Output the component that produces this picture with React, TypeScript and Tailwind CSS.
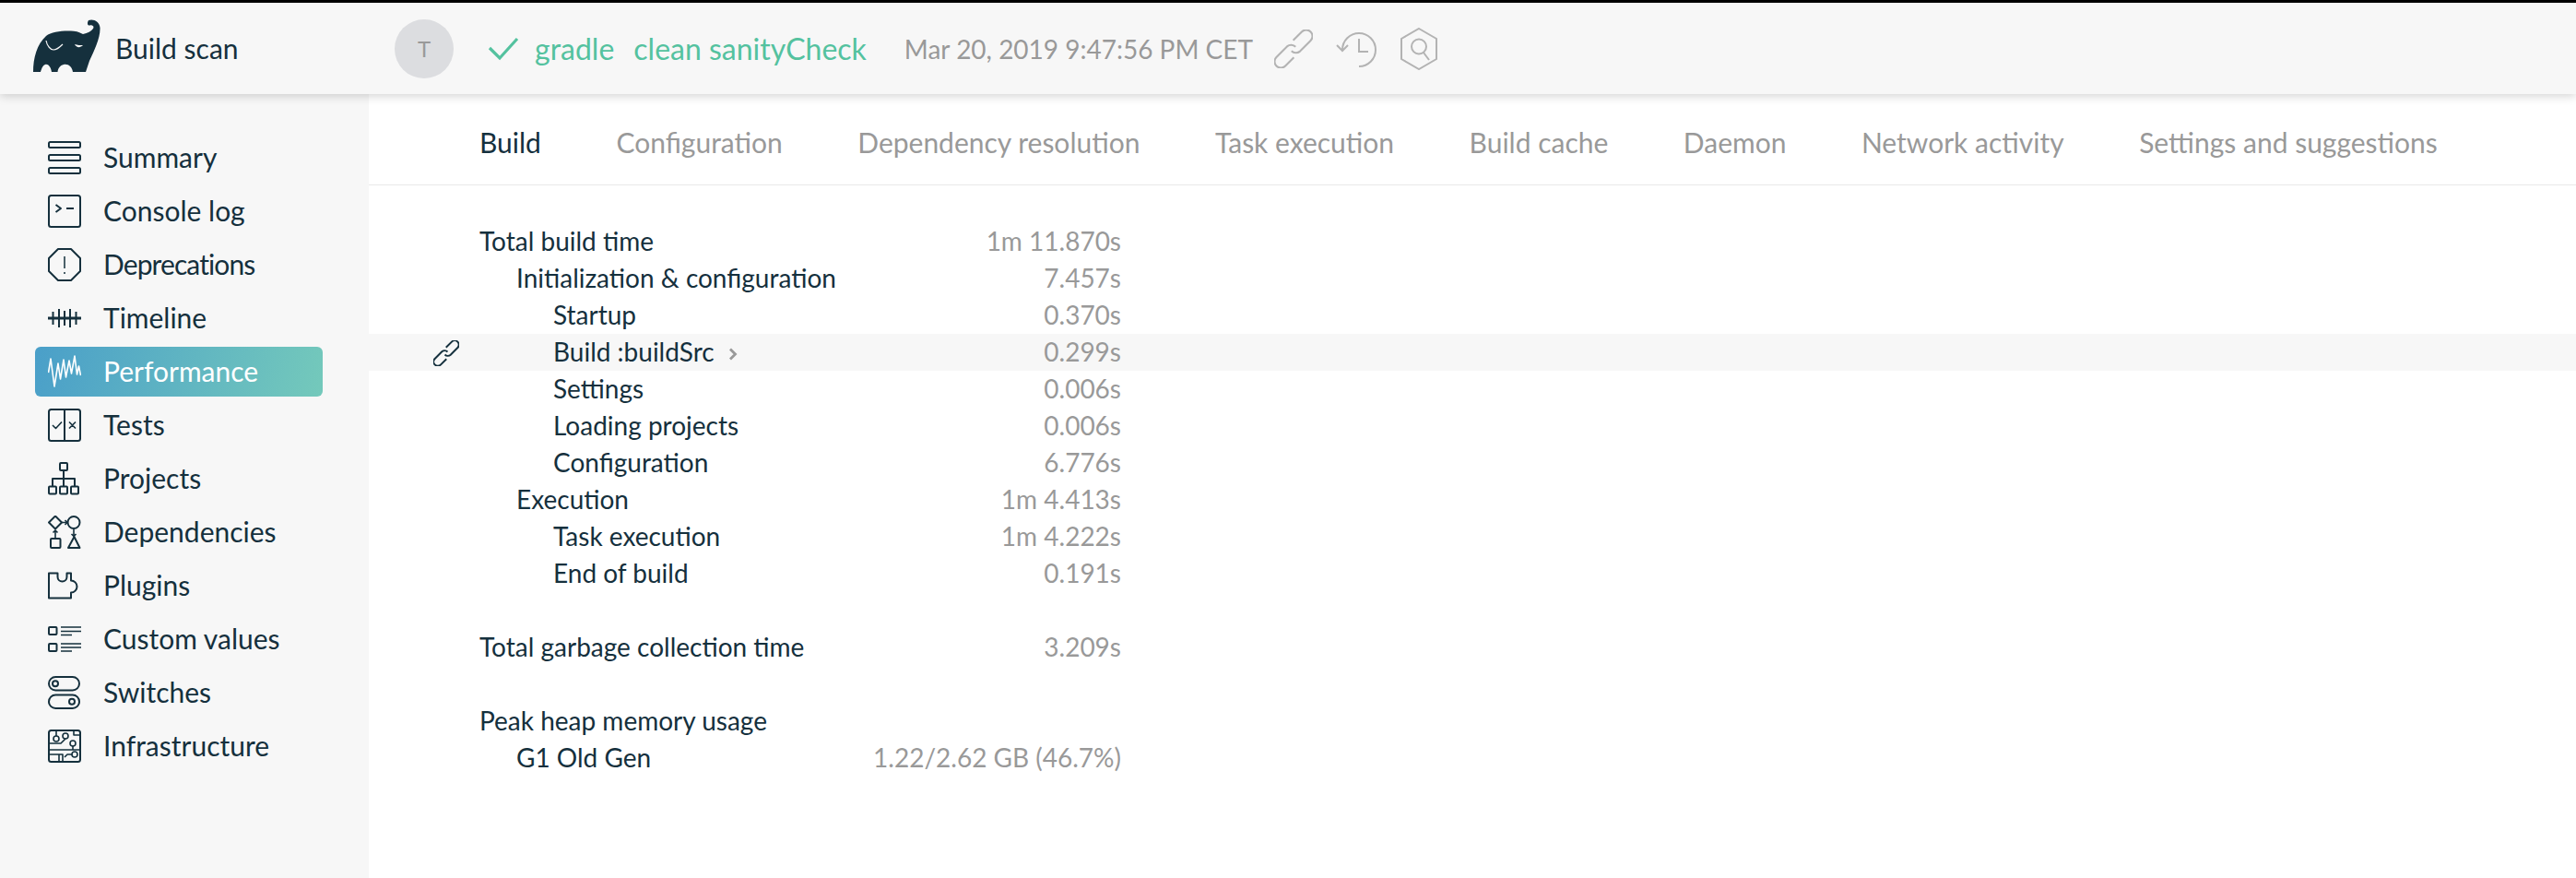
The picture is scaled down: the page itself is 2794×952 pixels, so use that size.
import { ReactNode } from "react";

function Icon({ children }: { children: ReactNode }) {
  return (
    <svg
      viewBox="0 0 36 36"
      className="h-9 w-9 shrink-0"
      fill="none"
      stroke="currentColor"
      strokeWidth="2"
      strokeLinejoin="round"
    >
      {children}
    </svg>
  );
}

const navItems: { label: string; active?: boolean; tight?: boolean; icon: ReactNode }[] = [
  {
    label: "Summary",
    icon: (
      <>
        <rect x="1" y="1" width="34" height="6" rx="1.5" />
        <rect x="1" y="15" width="34" height="6" rx="1.5" />
        <rect x="1" y="29" width="34" height="6" rx="1.5" />
      </>
    ),
  },
  {
    label: "Console log",
    icon: (
      <>
        <rect x="1" y="1" width="34" height="34" rx="2.5" />
        <path d="M8.500 11l5.500 4-5.500 4M20 15h8" />
      </>
    ),
  },
  {
    label: "Deprecations",
    tight: true,
    icon: (
      <>
        <path d="M11 1h14l10 10v14L25 35H11L1 25V11z" />
        <path d="M18 9v13M18 26v2" strokeWidth="1.5" />
      </>
    ),
  },
  {
    label: "Timeline",
    icon: (
      <>
        <path d="M0 18h36" strokeWidth="3" />
        <path d="M5.500 11v14M12 8v20M18 10v16M24 8v20M30.500 11v14" />
      </>
    ),
  },
  {
    label: "Performance",
    active: true,
    icon: (
      <path
        d="M0.500 19L3 4l4 30 4-25 2.500 17 3.500-21 2.500 19L23 6l2.500 14L29 1l2.500 20 2-9 2 10"
        strokeWidth="1.6"
      />
    ),
  },
  {
    label: "Tests",
    icon: (
      <>
        <rect x="1" y="1" width="34" height="34" rx="2.5" />
        <path d="M18 1v34" />
        <path d="M5 18l3.500 3.500L15 14.500M23 14.500l7 7M30 14.500l-7 7" strokeWidth="1.6" />
      </>
    ),
  },
  {
    label: "Projects",
    icon: (
      <>
        <rect x="13" y="1" width="8" height="8" rx="1" />
        <rect x="1" y="26.500" width="8" height="8" rx="1" />
        <rect x="13" y="26.500" width="8" height="8" rx="1" />
        <rect x="25" y="26.500" width="8" height="8" rx="1" />
        <path d="M17 9v17.500M5 26.500V18h24v8.500" />
      </>
    ),
  },
  {
    label: "Dependencies",
    icon: (
      <>
        <path d="M8 0.500L15 7.500 8 14.500 1 7.500z" />
        <circle cx="28" cy="7.500" r="6.500" />
        <rect x="3" y="25" width="10.500" height="10" rx="1" />
        <path d="M28.500 23l6 12h-12.500z" />
        <path
          d="M15 7.500h6M18.500 5l2.500 2.500-2.500 2.500M8 25v-9M5.500 18.500L8 16l2.500 2.500M28 14.500v8M25.500 20l2.500 2.500 2.500-2.500"
          strokeWidth="1.6"
        />
      </>
    ),
  },
  {
    label: "Plugins",
    icon: <path d="M1 4.500h9.500v4a5 5 0 0 0 10 0v-4H25v8a6.500 6.500 0 0 1 0 13v6H1z" />,
  },
  {
    label: "Custom values",
    icon: (
      <>
        <rect x="1" y="5" width="8.500" height="8" rx="1" />
        <rect x="1" y="23" width="8.500" height="8" rx="1" />
        <path d="M14 5h22M14 9.500h22M14 13.500h12M14 23h22M14 27h22M14 31h12" strokeWidth="1.6" />
      </>
    ),
  },
  {
    label: "Switches",
    icon: (
      <>
        <rect x="1" y="1" width="33" height="14.500" rx="7.250" />
        <rect x="1" y="20.500" width="33" height="14.500" rx="7.250" />
        <circle cx="8" cy="8.200" r="3" />
        <circle cx="26" cy="27.800" r="3" />
      </>
    ),
  },
  {
    label: "Infrastructure",
    icon: (
      <>
        <rect x="1" y="1" width="34" height="34" rx="2.500" />
        <circle cx="9" cy="10" r="3" strokeWidth="1.6" />
        <circle cx="19" cy="7" r="3" strokeWidth="1.6" />
        <circle cx="27" cy="15" r="3" strokeWidth="1.6" />
        <circle cx="29" cy="27" r="3" strokeWidth="1.6" />
        <path d="M9 1v6M1 15h13l5-5M28 1v5h7M1 22h34M1 27h15v8M26 27h-5l-3 3M12 27v8M27 18v4" strokeWidth="1.6" />
      </>
    ),
  },
];

const tabs = [
  "Build",
  "Configuration",
  "Dependency resolution",
  "Task execution",
  "Build cache",
  "Daemon",
  "Network activity",
  "Settings and suggestions",
];

const rows: { label?: string; value?: string; level?: number; hover?: boolean }[] = [
  { label: "Total build time", value: "1m 11.870s", level: 0 },
  { label: "Initialization & configuration", value: "7.457s", level: 1 },
  { label: "Startup", value: "0.370s", level: 2 },
  { label: "Build :buildSrc", value: "0.299s", level: 2, hover: true },
  { label: "Settings", value: "0.006s", level: 2 },
  { label: "Loading projects", value: "0.006s", level: 2 },
  { label: "Configuration", value: "6.776s", level: 2 },
  { label: "Execution", value: "1m 4.413s", level: 1 },
  { label: "Task execution", value: "1m 4.222s", level: 2 },
  { label: "End of build", value: "0.191s", level: 2 },
  {},
  { label: "Total garbage collection time", value: "3.209s", level: 0 },
  {},
  { label: "Peak heap memory usage", level: 0 },
  { label: "G1 Old Gen", value: "1.22/2.62 GB (46.7%)", level: 1 },
];

function LinkIcon({ className, stroke = 2 }: { className: string; stroke?: number }) {
  return (
    <svg viewBox="0 0 40 40" className={className} fill="none" stroke="currentColor" strokeWidth={stroke}>
      <g transform="rotate(-45 20 20)">
        <path d="M14 26.500H1.500a6.500 6.500 0 0 1 0-13H17a6.500 6.500 0 0 1 6 6.500" />
        <path d="M26 13.500h12.500a6.500 6.500 0 0 1 0 13H23a6.500 6.500 0 0 1-6-6.500" />
      </g>
    </svg>
  );
}

export default function App() {
  return (
    <div className="flex h-[952px] w-[2794px] flex-col overflow-hidden bg-white font-['Lato',sans-serif] text-[28px] text-[#15303d]">
      <header className="relative z-10 flex h-[102px] shrink-0 items-center border-t-[3px] border-black bg-[#f7f7f7] shadow-[0_2px_10px_rgba(0,0,0,0.18)]">
        <div className="flex w-[428px] shrink-0 items-center pl-9">
          <svg viewBox="0 0 74 58" className="mt-[-5px] h-[58px] w-[74px] text-[#15303d]">
            <path
              fill="currentColor"
              d="M0 57C0 42 4 27 14 18C20 13 33 12 44 12.700C49 13 52 15 54 16C59 15 63 13 65 10C66.500 7.500 64 5.500 61.500 6.500C59 7 58 4 60 1C65 -1 72 2 72.500 9C73 20 66 34 61 45L57 57H43C42 51 38 48 33 49C29 50 27 53 26.500 57H20C19 51 16 48 13 49C10 50 9 54 8 57Z"
            />
            <path d="M14 23C15 29 19 33 22 33C26 33 29 30 32 27" stroke="#f7f7f7" strokeWidth="1.2" fill="none" />
            <path d="M45 27C47 31 51 31 54 28C51 28 48 28 45 27Z" fill="#f7f7f7" />
          </svg>
          <span className="ml-[15px] whitespace-nowrap text-[30px]">Build scan</span>
        </div>
        <div className="flex h-16 w-16 shrink-0 items-center justify-center rounded-full bg-[#dcdde0] text-[24px] text-[#999999]">
          T
        </div>
        <svg
          viewBox="0 0 34 26"
          className="ml-[37px] h-[26px] w-[34px] shrink-0"
          fill="none"
          stroke="#54c29f"
          strokeWidth="3.2"
        >
          <path d="M2 12l11 11L32 2" />
        </svg>
        <span className="ml-[17px] text-[32px] text-[#54c29f]">gradle</span>
        <span className="ml-[21px] text-[32px] text-[#54c29f]">clean sanityCheck</span>
        <span className="ml-[41px] whitespace-nowrap text-[#999999]">Mar 20, 2019 9:47:56 PM CET</span>
        <LinkIcon className="ml-[23px] h-[42px] w-[42px] text-[#b3b3b3]" />
        <svg
          viewBox="0 0 45 42"
          className="ml-[25px] h-[42px] w-[45px] text-[#b3b3b3]"
          fill="none"
          stroke="currentColor"
          strokeWidth="2"
        >
          <path d="M7 22a18 18 0 1 1 18 18" />
          <path d="M1 17l6 6 6-6M25 10v14h10" />
        </svg>
        <svg
          viewBox="0 0 40 46"
          className="ml-[25px] h-[46px] w-10 text-[#b3b3b3]"
          fill="none"
          stroke="currentColor"
          strokeWidth="2"
        >
          <path d="M20 1l19 11v22L20 45 1 34V12z" />
          <circle cx="20" cy="20.500" r="8" />
          <path d="M25 27l6 8" />
        </svg>
      </header>

      <div className="flex min-h-0 flex-1">
        <aside className="w-[400px] shrink-0 bg-[#f7f7f7] pl-[38px] pr-[50px] pt-[42px]">
          <nav className="flex flex-col gap-1">
            {navItems.map((item) => (
              <div
                key={item.label}
                className={
                  item.active
                    ? "flex h-[54px] items-center rounded-[6px] bg-[linear-gradient(105deg,#4a9fc9,#74c9bb)] pl-[14px] text-white"
                    : "flex h-[54px] items-center pl-[14px]"
                }
              >
                <Icon>{item.icon}</Icon>
                <span
                  className={
                    item.tight
                      ? "mb-[1px] ml-[24px] whitespace-nowrap text-[30px] tracking-[-0.9px]"
                      : "mb-[1px] ml-[24px] whitespace-nowrap text-[30px]"
                  }
                >
                  {item.label}
                </span>
              </div>
            ))}
          </nav>
        </aside>

        <main className="min-w-0 flex-1">
          <div className="flex h-[99px] items-center gap-[81.5px] border-b border-[#e8e8e8] pl-[120px] pt-[7px] text-[30px] text-[#999999]">
            {tabs.map((tab, i) => (
              <span key={tab} className={i === 0 ? "whitespace-nowrap text-[#15303d]" : "whitespace-nowrap"}>
                {tab}
              </span>
            ))}
          </div>
          <div className="pt-[41px]">
            {rows.map((row, i) => (
              <div key={i} className={row.hover ? "relative h-10 bg-[#f7f7f7] pl-[120px]" : "relative h-10 pl-[120px]"}>
                {row.hover && (
                  <LinkIcon className="absolute left-[70px] top-[7px] h-7 w-7 text-[#15303d]" stroke={2.8} />
                )}
                <div className="flex h-full w-[696px] items-center justify-between pb-[2px]">
                  <span className={row.level === 2 ? "flex items-center pl-[80px]" : row.level === 1 ? "pl-[40px]" : ""}>
                    {row.label}
                    {row.hover && (
                      <svg
                        viewBox="0 0 10 14"
                        className="ml-[15px] mt-[5px] h-[14px] w-[10px] text-[#999999]"
                        fill="none"
                        stroke="currentColor"
                        strokeWidth="2.8"
                      >
                        <path d="M2 1.500l5.500 5.500-5.500 5.500" />
                      </svg>
                    )}
                  </span>
                  <span className="text-[#999999]">{row.value}</span>
                </div>
              </div>
            ))}
          </div>
        </main>
      </div>
    </div>
  );
}
